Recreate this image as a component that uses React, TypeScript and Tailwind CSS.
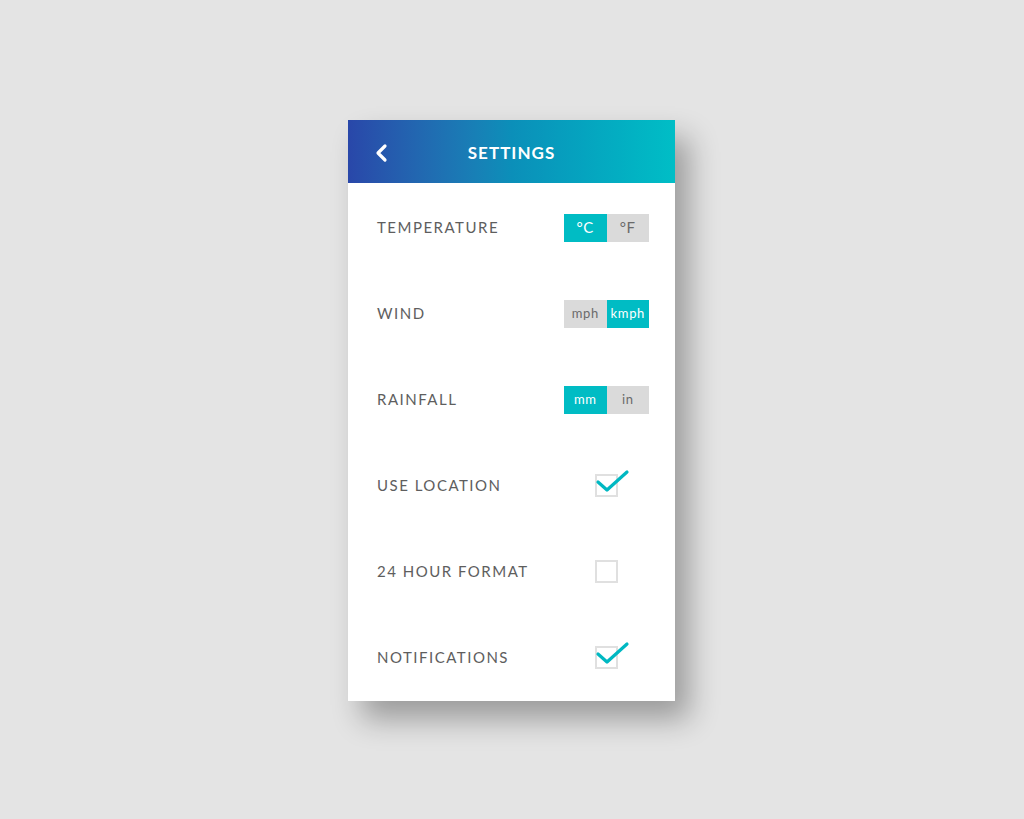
import { useState } from "react";

type Opt = { a: string; b: string; sel: "a" | "b"; small?: boolean };

function Segmented({ a, b, sel, small }: Opt) {
  const [cur, setCur] = useState(sel);
  const base = `flex-1 flex items-center justify-center font-normal ${small ? "text-[13px]" : "text-[15px]"} tracking-[0.05em]`;
  return (
    <div className="flex w-[85px] h-[28px]">
      <button
        onClick={() => setCur("a")}
        className={`${base} ${cur === "a" ? "bg-[#00bcc4] text-white" : "bg-[#dadada] text-[#6a6a6a]"}`}
      >
        {a}
      </button>
      <button
        onClick={() => setCur("b")}
        className={`${base} ${cur === "b" ? "bg-[#00bcc4] text-white" : "bg-[#dadada] text-[#6a6a6a]"}`}
      >
        {b}
      </button>
    </div>
  );
}

function Check({ on }: { on: boolean }) {
  const [checked, setChecked] = useState(on);
  return (
    <button onClick={() => setChecked(!checked)} className="relative w-[23px] h-[23px] border-2 border-[#e0e0e0] bg-white">
      {checked && (
        <svg className="absolute left-[0px] top-[-12px] overflow-visible" width="32" height="28" viewBox="0 0 32 28">
          <path d="M1 18 L10 26 L30 8" fill="none" stroke="#00b8c2" strokeWidth="3.2" strokeLinecap="round" strokeLinejoin="round" />
        </svg>
      )}
    </button>
  );
}

const rows: { label: string; control: JSX.Element }[] = [
  { label: "TEMPERATURE", control: <Segmented a="°C" b="°F" sel="a" /> },
  { label: "WIND", control: <Segmented a="mph" b="kmph" sel="b" small /> },
  { label: "RAINFALL", control: <Segmented a="mm" b="in" sel="a" small /> },
  { label: "USE LOCATION", control: <Check on /> },
  { label: "24 HOUR FORMAT", control: <Check on={false} /> },
  { label: "NOTIFICATIONS", control: <Check on /> },
];

export default function App() {
  return (
    <div className="min-h-screen bg-[#e4e4e4] flex items-center justify-center font-['Lato',sans-serif]">
      <div className="w-[327px] mr-[1px] mt-[1px] bg-white shadow-[14px_18px_28px_rgba(0,0,0,0.32)]">
        {/* Header */}
        <div className="relative h-[63px] flex items-center justify-center bg-gradient-to-r from-[#2947a9] via-[#0b8fb9] to-[#00bec6]">
          <button className="absolute left-[27px] top-[23px] text-white">
            <svg width="14" height="20" viewBox="0 0 14 20">
              <path d="M10 3 L3 10 L10 17" fill="none" stroke="white" strokeWidth="3.2" strokeLinecap="round" strokeLinejoin="round" />
            </svg>
          </button>
          <h1 className="text-white text-[17px] font-bold tracking-[0.06em] mt-[4px]">SETTINGS</h1>
        </div>

        {/* Rows */}
        <div className="pt-[2px]">
          {rows.map((r) => (
            <div key={r.label} className="h-[86px] flex items-center pl-[29px] pr-[26px]">
              <span className="flex-1 text-[15px] text-[#5e5e5e] tracking-[0.1em]">{r.label}</span>
              <div className="w-[85px] flex justify-center">{r.control}</div>
            </div>
          ))}
        </div>
      </div>
    </div>
  );
}
